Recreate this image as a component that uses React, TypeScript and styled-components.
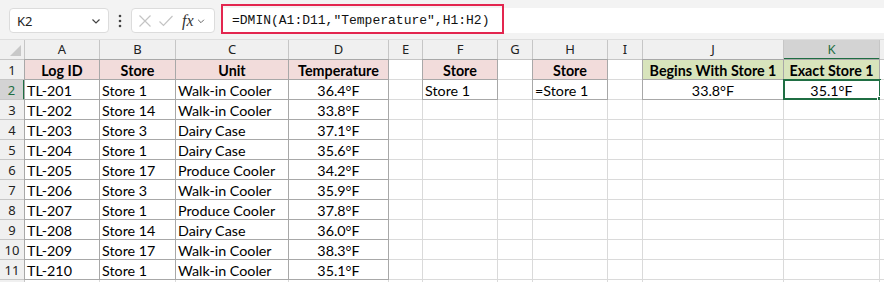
import React from "react";
import styled, { createGlobalStyle, css } from "styled-components";

const GlobalStyle = createGlobalStyle`
  html, body {
    margin: 0;
    padding: 0;
    background: #ffffff;
  }
  body {
    font-family: "Lato", "Noto Sans", sans-serif;
  }
`;

const Colors = {
  Toolbar: "#f3f3f3",
  HeaderBg: "#f0f0f0",
  HeaderLine: "#c6c6c6",
  GridLine: "#dadada",
  DataLine: "#a8a8a8",
  Pink: "#f2dcdb",
  Green: "#d8e4bc",
  Select: "#1f6e43",
  SelectedHeader: "#d3d3d3",
  Red: "#e3264f",
};

const COLS = [25, 75, 76, 113, 100, 34, 75, 35, 75, 35, 141, 96, 10];
const LETTERS = ["A", "B", "C", "D", "E", "F", "G", "H", "I", "J", "K", ""];

const Page = styled.div`
  width: 884px;
  height: 282px;
  overflow: hidden;
  background: #fff;
`;

const Toolbar = styled.div`
  height: 40px;
  box-sizing: border-box;
  background: ${Colors.Toolbar};
  display: flex;
  align-items: flex-start;
  padding: 8px 0 0 9px;
  border-bottom: 1px solid #dedede;
`;

const NameBox = styled.div`
  width: 100px;
  height: 25px;
  box-sizing: border-box;
  background: #fff;
  border: 1px solid #dcdcdc;
  border-radius: 4px;
  display: flex;
  align-items: center;
  justify-content: space-between;
  padding: 0 6px 0 7px;
  font-family: "Noto Sans", "Open Sans", sans-serif;
  font-size: 13px;
  color: #222;
`;

const Dots = styled.div`
  width: 22px;
  height: 25px;
  display: flex;
  align-items: center;
  justify-content: center;
`;

const FxBox = styled.div`
  width: 84px;
  height: 25px;
  box-sizing: border-box;
  background: #fff;
  border: 1px solid #dcdcdc;
  border-radius: 4px;
  display: flex;
  align-items: center;
  gap: 6px;
  padding-left: 6px;
`;

const FxText = styled.span`
  font-family: "Liberation Serif", "DejaVu Serif", serif;
  font-style: italic;
  font-size: 16px;
  color: #333;
  margin-left: 2px;
`;

const FormulaWrap = styled.div`
  position: relative;
  flex: 1;
  height: 25px;
  margin-left: 7px;
  background: #fff;
  display: flex;
  align-items: center;
`;

const FormulaText = styled.div`
  font-family: "Liberation Mono", "DejaVu Sans Mono", monospace;
  font-size: 13px;
  color: #111;
  padding-left: 10px;
  white-space: pre;
`;

const Highlight = styled.div`
  position: absolute;
  left: -1px;
  top: -4px;
  width: 283px;
  height: 30px;
  box-sizing: border-box;
  border: 2px solid ${Colors.Red};
  pointer-events: none;
`;

const Grid = styled.div`
  display: grid;
  grid-template-columns: ${COLS.map((c) => c + "px").join(" ")};
  grid-auto-rows: 20px;
`;

const ColHeader = styled.div<{ $selected?: boolean }>`
  box-sizing: border-box;
  background: ${(p) => (p.$selected ? Colors.SelectedHeader : Colors.HeaderBg)};
  border-right: 1px solid ${Colors.HeaderLine};
  border-bottom: ${(p) =>
    p.$selected ? `2px solid ${Colors.Select}` : `1px solid ${Colors.HeaderLine}`};
  color: ${(p) => (p.$selected ? Colors.Select : "#222")};
  font-family: "Noto Sans", "Open Sans", sans-serif;
  font-size: 13px;
  display: flex;
  align-items: center;
  justify-content: center;
  line-height: 1;
`;

const Corner = styled.div`
  position: relative;
  box-sizing: border-box;
  background: ${Colors.HeaderBg};
  border-right: 1px solid ${Colors.HeaderLine};
  border-bottom: 1px solid ${Colors.HeaderLine};
  &::after {
    content: "";
    position: absolute;
    right: 3px;
    bottom: 3px;
    width: 0;
    height: 0;
    border-left: 11px solid transparent;
    border-bottom: 11px solid #c8c8c8;
  }
`;

const RowHeader = styled.div<{ $selected?: boolean }>`
  box-sizing: border-box;
  background: ${(p) => (p.$selected ? Colors.SelectedHeader : Colors.HeaderBg)};
  border-right: ${(p) =>
    p.$selected ? `2px solid ${Colors.Select}` : `1px solid ${Colors.HeaderLine}`};
  border-bottom: 1px solid ${Colors.HeaderLine};
  color: ${(p) => (p.$selected ? Colors.Select : "#222")};
  font-family: "Noto Sans", "Open Sans", sans-serif;
  font-size: 13px;
  display: flex;
  align-items: center;
  justify-content: center;
`;

type Align = "left" | "center";

const Cell = styled.div<{
  $fill?: string;
  $bold?: boolean;
  $align?: Align;
  $data?: boolean;
}>`
  position: relative;
  box-sizing: border-box;
  background: ${(p) => p.$fill || "#fff"};
  border-right: 1px solid ${(p) => (p.$data ? Colors.DataLine : Colors.GridLine)};
  border-bottom: 1px solid ${(p) => (p.$data ? Colors.DataLine : Colors.GridLine)};
  font-size: 14.3px;
  font-weight: ${(p) => (p.$bold ? 700 : 400)};
  color: #000;
  display: flex;
  align-items: center;
  justify-content: ${(p) => (p.$align === "center" ? "center" : "flex-start")};
  padding: 1px 2px 0;
  white-space: nowrap;
  overflow: visible;
  ${(p) =>
    p.$data &&
    css`
      box-shadow: -1px 0 0 ${Colors.DataLine}, 0 -1px 0 ${Colors.DataLine},
        -1px -1px 0 ${Colors.DataLine};
    `}
`;

const SelectBox = styled.div`
  position: absolute;
  left: -1px;
  top: -1px;
  right: -2px;
  bottom: -1px;
  border: 2px solid ${Colors.Select};
  pointer-events: none;
  &::after {
    content: "";
    position: absolute;
    right: -5px;
    bottom: -5px;
    width: 5px;
    height: 5px;
    background: ${Colors.Select};
    border: 1px solid #fff;
  }
`;

type CellDef = {
  text?: string;
  fill?: string;
  bold?: boolean;
  align?: Align;
  data?: boolean;
  selected?: boolean;
};

const log = [
  ["TL-201", "Store 1", "Walk-in Cooler", "36.4°F"],
  ["TL-202", "Store 14", "Walk-in Cooler", "33.8°F"],
  ["TL-203", "Store 3", "Dairy Case", "37.1°F"],
  ["TL-204", "Store 1", "Dairy Case", "35.6°F"],
  ["TL-205", "Store 17", "Produce Cooler", "34.2°F"],
  ["TL-206", "Store 3", "Walk-in Cooler", "35.9°F"],
  ["TL-207", "Store 1", "Produce Cooler", "37.8°F"],
  ["TL-208", "Store 14", "Dairy Case", "36.0°F"],
  ["TL-209", "Store 17", "Walk-in Cooler", "38.3°F"],
  ["TL-210", "Store 1", "Walk-in Cooler", "35.1°F"],
];

function buildRows(): CellDef[][] {
  const rows: CellDef[][] = [];
  const head = (t: string, fill: string): CellDef => ({
    text: t,
    fill,
    bold: true,
    align: "center",
    data: true,
  });
  rows.push([
    head("Log ID", Colors.Pink),
    head("Store", Colors.Pink),
    head("Unit", Colors.Pink),
    head("Temperature", Colors.Pink),
    {},
    head("Store", Colors.Pink),
    {},
    head("Store", Colors.Pink),
    {},
    head("Begins With Store 1", Colors.Green),
    head("Exact Store 1", Colors.Green),
    {},
  ]);
  log.forEach((r, i) => {
    const row: CellDef[] = [
      { text: r[0], data: true },
      { text: r[1], data: true },
      { text: r[2], data: true },
      { text: r[3], data: true, align: "center" },
    ];
    if (i === 0) {
      row.push(
        {},
        { text: "Store 1", data: true },
        {},
        { text: "=Store 1", data: true },
        {},
        { text: "33.8°F", data: true, align: "center" },
        { text: "35.1°F", data: true, align: "center", selected: true },
        {}
      );
    } else {
      for (let k = 0; k < 8; k++) row.push({});
    }
    rows.push(row);
  });
  // partial row 12 peeking in at the bottom edge
  const blank: CellDef[] = [];
  for (let k = 0; k < 12; k++) blank.push({});
  rows.push(blank);
  return rows;
}

function Chevron() {
  return (
    <svg width="12" height="12" viewBox="0 0 12 12">
      <path d="M2.5 4.5 L6 8 L9.5 4.5" fill="none" stroke="#444" strokeWidth="1.2" />
    </svg>
  );
}

export default function App() {
  const rows = buildRows();
  return (
    <Page>
      <GlobalStyle />
      <Toolbar>
        <NameBox>
          <span>K2</span>
          <Chevron />
        </NameBox>
        <Dots>
          <svg width="4" height="14" viewBox="0 0 4 14">
            <circle cx="2" cy="2" r="1.3" fill="#444" />
            <circle cx="2" cy="7" r="1.3" fill="#444" />
            <circle cx="2" cy="12" r="1.3" fill="#444" />
          </svg>
        </Dots>
        <FxBox>
          <svg width="14" height="14" viewBox="0 0 14 14">
            <path d="M1.5 1.5 L12.5 12.5 M12.5 1.5 L1.5 12.5" stroke="#c4c4c4" strokeWidth="1.2" />
          </svg>
          <svg width="16" height="14" viewBox="0 0 16 14">
            <path d="M1.5 7.5 L5.5 11.5 L14.5 2" fill="none" stroke="#c4c4c4" strokeWidth="1.2" />
          </svg>
          <FxText>fx</FxText>
          <svg width="10" height="10" viewBox="0 0 12 12" style={{ marginLeft: -4 }}>
            <path d="M2.5 4.5 L6 8 L9.5 4.5" fill="none" stroke="#666" strokeWidth="1.2" />
          </svg>
        </FxBox>
        <FormulaWrap>
          <FormulaText>=DMIN(A1:D11,"Temperature",H1:H2)</FormulaText>
          <Highlight />
        </FormulaWrap>
      </Toolbar>
      <Grid>
        <Corner />
        {LETTERS.map((l, i) => (
          <ColHeader key={"h" + i} $selected={l === "K"}>
            {l}
          </ColHeader>
        ))}
        {rows.map((row, ri) => (
          <React.Fragment key={"r" + ri}>
            <RowHeader $selected={ri === 1}>{ri < 11 ? ri + 1 : null}</RowHeader>
            {row.map((c, ci) => (
              <Cell
                key={ci}
                $fill={c.fill}
                $bold={c.bold}
                $align={c.align}
                $data={c.data}
              >
                {c.text}
                {c.selected && <SelectBox />}
              </Cell>
            ))}
          </React.Fragment>
        ))}
      </Grid>
    </Page>
  );
}
